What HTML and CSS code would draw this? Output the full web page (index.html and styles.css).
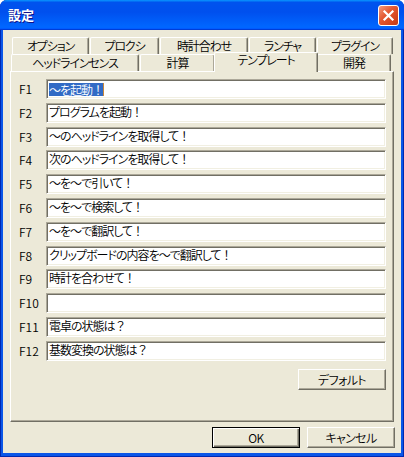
FILE: index.html
```html
<!DOCTYPE html>
<html lang="ja">
<head>
  <meta charset="UTF-8">
  <title>設定</title>
  <link rel="stylesheet" href="styles.css">
</head>
<body>
  <div class="window">
    <div class="titlebar">
      <span class="title">設定</span>
      <button class="close" aria-label="閉じる">
        <svg width="13" height="13" viewBox="0 0 13 13"><path d="M2.5 2.5 L10.5 10.5 M10.5 2.5 L2.5 10.5" stroke="#fff" stroke-width="2.2" stroke-linecap="square"/></svg>
      </button>
    </div>

    <div class="client">
      <div class="tabrow row1">
        <div class="tab w-opt">オプション</div>
        <div class="tab w-proxy">プロクシ</div>
        <div class="tab w-clock">時計合わせ</div>
        <div class="tab w-launch">ランチャ</div>
        <div class="tab w-plugin">プラグイン</div>
      </div>
      <div class="tabrow row2">
        <div class="tab w-head">ヘッドラインセンス</div>
        <div class="tab w-calc">計算</div>
        <div class="tab w-tmpl active">テンプレート</div>
        <div class="tab w-dev">開発</div>
      </div>

      <div class="panel">
        <div class="fields">
          <span class="key">F1</span><div class="field"><span class="sel">～を起動<span class="fw">！</span></span><span class="caret"></span></div>
          <span class="key">F2</span><div class="field">プログラムを起動<span class="fw">！</span></div>
          <span class="key">F3</span><div class="field">～のヘッドラインを取得して<span class="fw">！</span></div>
          <span class="key">F4</span><div class="field">次のヘッドラインを取得して<span class="fw">！</span></div>
          <span class="key">F5</span><div class="field">～を～で引いて<span class="fw">！</span></div>
          <span class="key">F6</span><div class="field">～を～で検索して<span class="fw">！</span></div>
          <span class="key">F7</span><div class="field">～を～で翻訳して<span class="fw">！</span></div>
          <span class="key">F8</span><div class="field">クリップボードの内容を～で翻訳して<span class="fw">！</span></div>
          <span class="key">F9</span><div class="field">時計を合わせて<span class="fw">！</span></div>
          <span class="key">F10</span><div class="field"></div>
          <span class="key">F11</span><div class="field">電卓の状態は<span class="fw">？</span></div>
          <span class="key">F12</span><div class="field">基数変換の状態は<span class="fw">？</span></div>
        </div>
        <div class="panel-foot">
          <button class="btn">デフォルト</button>
        </div>
      </div>

      <div class="actions">
        <button class="btn default">OK</button>
        <button class="btn">キャンセル</button>
      </div>
    </div>
  </div>
</body>
</html>
```

FILE: styles.css
```css
* { box-sizing: border-box; }
body { margin: 0; background: #fff; font-family: "Noto Sans CJK JP", "Liberation Sans", sans-serif; font-size: 12px; font-weight: 350; font-feature-settings: "palt"; color: #000; }

/* window frame */
.window { width: 404px; height: 457px; display: flex; flex-direction: column; background: #0A56E8; border-radius: 7px 7px 0 0; overflow: hidden; box-shadow: inset 1px 0 #0028B0, inset -1px 0 #0028B0, inset 0 -1px #0028B0; }
.titlebar { height: 30px; flex: none; display: flex; align-items: center; justify-content: space-between; padding: 0 5px 0 8px; background: linear-gradient(180deg, #0997ff, #0053ee 8%, #0050ee 40%, #0066ff 88%, #0066ff 93%, #005bff 95%, #003dd7 96%, #003dd7); }
.title { color: #fff; font-weight: bold; font-size: 13px; line-height: 16px; text-shadow: 1px 1px #0F1089; }
.close { width: 21px; height: 21px; margin-top: 1px; padding: 0; display: flex; align-items: center; justify-content: center; border: 1px solid #fff; border-radius: 3px; background: linear-gradient(135deg, #F39A7C 0%, #E45A34 40%, #D4451F 75%, #C03A18 100%); }

.client { flex: 1; margin: 0 3px 4px; background: #ECE9D8; padding-top: 7px; }

/* tabs */
.tabrow { display: flex; align-items: flex-start; height: 17px; gap: 1px; }
.row1 { padding-left: 9px; }
.row2 { padding-left: 8px; }
.tab { height: 17px; flex: none; text-align: center; line-height: 16px; white-space: nowrap; letter-spacing: -1.1px; background: #ECE9D8; border-top: 1px solid #fff; border-left: 1px solid #fff; border-right: 1px solid #716F64; border-radius: 2px 2px 0 0; box-shadow: inset -1px 0 #ACA899; }
.tab.active { height: 20px; margin: -2px -2px 0; padding-top: 1px; line-height: 12px; position: relative; z-index: 1; }
.w-opt { width: 77px; }
.w-proxy { width: 69px; }
.w-clock { width: 88px; }
.w-launch { width: 67px; }
.w-plugin { width: 76px; }
.w-head { width: 128px; }
.w-calc { width: 75px; }
.w-tmpl { width: 104px; }
.w-dev { width: 74px; }

/* panel */
.panel { margin-left: 7px; width: 384px; height: 351px; padding: 7px 0 0 8px; border: 1px solid; border-color: #fff #716F64 #716F64 #fff; box-shadow: inset -1px -1px #ACA899; }
.fields { display: grid; grid-template-columns: 27px 340px; grid-auto-rows: 20px; row-gap: 3.8px; align-items: center; }
.key { line-height: 16px; }
.field { height: 20px; padding: 0 2px; line-height: 16px; letter-spacing: -1px; white-space: nowrap; overflow: hidden; background: #fff; border: 1px solid; border-color: #ACA899 #fff #fff #ACA899; box-shadow: inset 1px 1px #716F64, inset -1px -1px #F1EFE2; }
.fw { font-feature-settings: normal; letter-spacing: -1px; }
.sel { display: inline-block; background: #316AC5; color: #fff; line-height: 13px; vertical-align: middle; }
.caret { display: inline-block; width: 1px; height: 13px; background: #C9873A; vertical-align: middle; }
.panel-foot { display: flex; justify-content: flex-end; padding-right: 7px; margin-top: 8px; }

/* buttons */
.btn { width: 88px; height: 21px; padding: 0; font: inherit; letter-spacing: -0.6px; color: #000; background: #ECE9D8; border: 1px solid; border-color: #fff #716F64 #716F64 #fff; box-shadow: inset -1px -1px #ACA899; }
.btn.default { border-color: #000; box-shadow: inset 1px 1px #fff, inset -1px -1px #716F64, inset -2px -2px #ACA899; }
.actions { display: flex; justify-content: flex-end; gap: 7px; margin-top: 5px; padding-right: 6px; }
```
